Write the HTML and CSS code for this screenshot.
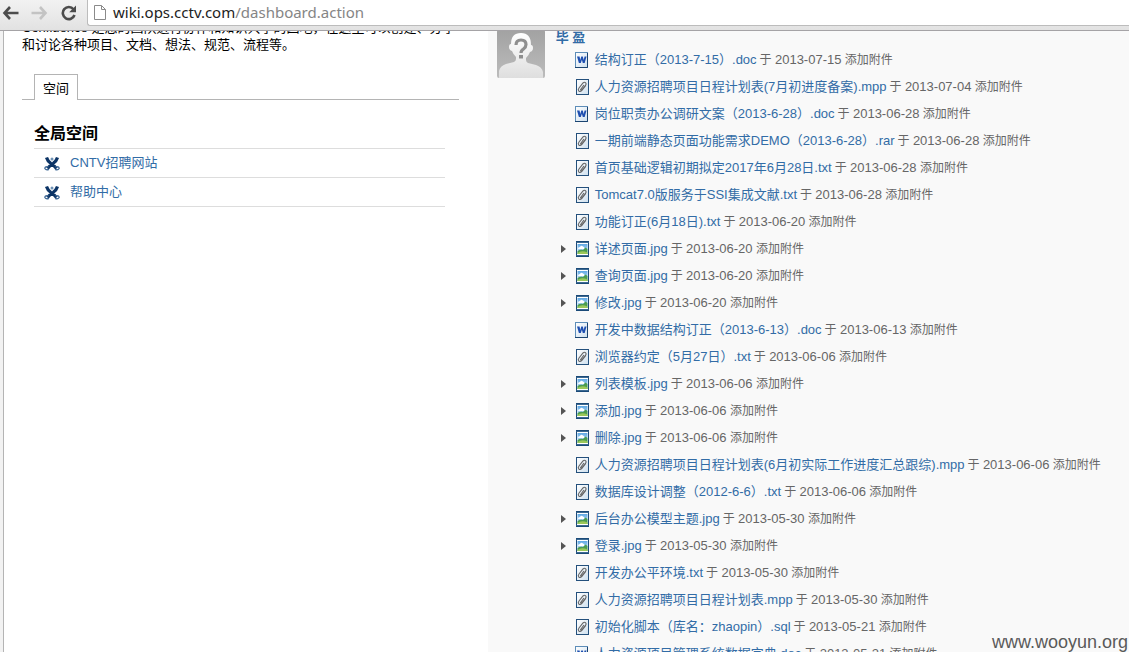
FILE: index.html
```html
<!DOCTYPE html>
<html lang="zh-CN">
<head>
<meta charset="utf-8">
<title>Dashboard</title>
<link rel="stylesheet" href="styles.css">
</head>
<body>
<svg class="defs" aria-hidden="true">
  <defs>
    <linearGradient id="paper" x1="0" y1="0" x2="1" y2="1"><stop offset="0" stop-color="#fff"/><stop offset="1" stop-color="#cfe0ee"/></linearGradient>
    <linearGradient id="sky" x1="0" y1="0" x2="0" y2="1"><stop offset="0" stop-color="#5fa8e4"/><stop offset="1" stop-color="#d8eefa"/></linearGradient>
    <linearGradient id="grey" x1="0" y1="0" x2="0" y2="1"><stop offset="0" stop-color="#a2a2a2"/><stop offset="1" stop-color="#bcbcbc"/></linearGradient>
    <linearGradient id="bust" x1="0" y1="0" x2="0" y2="1"><stop offset="0" stop-color="#fff"/><stop offset="1" stop-color="#dedede"/></linearGradient>
  </defs>
  <symbol id="doc" viewBox="0 0 14 16">
    <rect x=".5" y=".5" width="12" height="15" fill="url(#paper)" stroke="#5d8db8"/>
    <path d="M12.5 1v14.5H0" fill="none" stroke="#1b4470"/>
    <path d="M2 4.500h2.600l.6 3.600L6.300 4.500h1.500l.9 3.600.9-3.600h1.900L9.700 11H7.800l-.9-3.200L5.800 11H3.900z" fill="#1f4fb0"/>
  </symbol>
  <symbol id="clip" viewBox="0 0 14 16">
    <rect x="1.500" y=".5" width="12" height="15" fill="url(#paper)" stroke="#24507c"/>
    <path d="M10.800 6.300L6.700 11.700Q5 13.200 3.700 11.800Q2.700 10.600 4 9L8 4Q9.400 2.700 10.700 3.800Q11.700 4.900 10.500 6.400L6.900 10.900Q5.900 11.500 5.500 10.700L8.900 6" fill="none" stroke="#666" stroke-width="1.100"/>
  </symbol>
  <symbol id="img" viewBox="0 0 14 16">
    <rect x="1.500" y=".5" width="12" height="15" fill="#fff" stroke="#1b4a78"/>
    <path d="M1.500 1.500h12M1.500 14.500h12" stroke="#3d6a92"/>
    <rect x="2.500" y="3" width="10" height="10" fill="url(#sky)"/>
    <path d="M3 8q0-2 2-2 1-2 3-.5 1.500 0 1.500 2.500z" fill="#fff"/>
    <path d="M2.500 10q3-2 5.500-1l2.500-2.500 2 1.500v5h-10z" fill="#4c9c50"/>
    <path d="M2.500 12q4-3 10-.5V13h-10z" fill="#9bc85a"/>
  </symbol>
  <symbol id="space" viewBox="0 0 16 14">
    <circle cx="8" cy="2" r="1.500" fill="#6d91b5"/>
    <path d="M2.500 .5Q3.500 4 7 6.500Q10 8.500 12.500 11.500M13.500 .5Q12.500 4 9 6.500Q6 8.500 3.500 11.500" fill="none" stroke="#0c3466" stroke-width="3.200"/>
    <path d="M4.500 9.800Q1 9 .8 11.500Q2 13.500 5 12.300M11.500 9.800Q15 9 15.200 11.500Q14 13.500 11 12.300" fill="none" stroke="#456d99" stroke-width="1.300"/>
  </symbol>
</svg>
<header class="toolbar">
  <nav class="nav" aria-label="浏览器">
    <button class="nav-btn" aria-label="后退"><svg width="18" height="16" viewBox="0 0 18 16"><path d="M8 2L2.500 8 8 14M3 8h13.500" fill="none" stroke="#4c4c4c" stroke-width="2.600"/></svg></button>
    <button class="nav-btn" aria-label="前进"><svg width="18" height="16" viewBox="0 0 18 16"><path d="M9 2l5.500 6L9 14M14 8H.5" fill="none" stroke="#c3c3c3" stroke-width="2.600"/></svg></button>
    <button class="nav-btn" aria-label="刷新"><svg width="18" height="16" viewBox="0 0 18 16"><path d="M13.500 4.300A6 6 0 1 0 14.500 10" fill="none" stroke="#4c4c4c" stroke-width="2.600"/><path d="M16 .5v6.800H9.200z" fill="#4c4c4c"/></svg></button>
  </nav>
  <div class="address" role="textbox" aria-label="地址">
    <svg width="12" height="15" viewBox="0 0 12 15"><path d="M.5.5h7l4 4v10H.5zM7.500.5v4h4" fill="#fff" stroke="#8a8a8a"/></svg>
    <span class="url"><span class="host">wiki.ops.cctv.com</span>/dashboard.action</span>
  </div>
</header>
<main class="viewport">
  <div class="page">
    <section class="left">
      <p class="intro">Confluence 是您的团队进行协作和知识共享的园地，在这里可以创建、分享和讨论各种项目、文档、想法、规范、流程等。</p>
      <div class="tabs"><button class="tab">空间</button></div>
      <div class="spaces">
        <h2 class="spaces-title">全局空间</h2>
        <ul class="space-list">
          <li class="space"><svg class="space-icon"><use href="#space"/></svg><a class="link" href="#">CNTV招聘网站</a></li>
          <li class="space"><svg class="space-icon"><use href="#space"/></svg><a class="link" href="#">帮助中心</a></li>
        </ul>
      </div>
    </section>
    <section class="feed">
      <svg class="avatar" viewBox="0 0 48 48"><rect width="48" height="48" rx="2" fill="url(#grey)"/><path d="M2 48v-7q1-5 7-7l8-2q2-1 2-3v-2q-3-3-4-6-3-1-3-4t2-3Q14 3 24 3t10 12q2 0 2 3t-3 4q-1 3-4 6v2q0 2 2 3l8 2q6 2 7 7v6z" fill="url(#bust)"/><path d="M19 15q0-5 5-5t5 4.500q0 2.500-2.500 4.500-2.500 1.500-2.500 4" fill="none" stroke="#8f8f8f" stroke-width="3.200"/><rect x="22" y="25" width="4" height="3.500" fill="#8f8f8f"/></svg>
      <div class="feed-body">
        <a class="user" href="#">毕 盈</a>
        <ul class="files">
          <li class="file"><svg class="icon"><use href="#doc"/></svg><a class="link" href="#">结构订正（2013-7-15）.doc</a><span class="meta">于 <time>2013-07-15</time> 添加附件</span></li>
          <li class="file"><svg class="icon"><use href="#clip"/></svg><a class="link" href="#">人力资源招聘项目日程计划表(7月初进度备案).mpp</a><span class="meta">于 <time>2013-07-04</time> 添加附件</span></li>
          <li class="file"><svg class="icon"><use href="#doc"/></svg><a class="link" href="#">岗位职责办公调研文案（2013-6-28）.doc</a><span class="meta">于 <time>2013-06-28</time> 添加附件</span></li>
          <li class="file"><svg class="icon"><use href="#clip"/></svg><a class="link" href="#">一期前端静态页面功能需求DEMO（2013-6-28）.rar</a><span class="meta">于 <time>2013-06-28</time> 添加附件</span></li>
          <li class="file"><svg class="icon"><use href="#clip"/></svg><a class="link" href="#">首页基础逻辑初期拟定2017年6月28日.txt</a><span class="meta">于 <time>2013-06-28</time> 添加附件</span></li>
          <li class="file"><svg class="icon"><use href="#clip"/></svg><a class="link" href="#">Tomcat7.0版服务于SSI集成文献.txt</a><span class="meta">于 <time>2013-06-28</time> 添加附件</span></li>
          <li class="file"><svg class="icon"><use href="#clip"/></svg><a class="link" href="#">功能订正(6月18日).txt</a><span class="meta">于 <time>2013-06-20</time> 添加附件</span></li>
          <li class="file expandable"><svg class="icon"><use href="#img"/></svg><a class="link" href="#">详述页面.jpg</a><span class="meta">于 <time>2013-06-20</time> 添加附件</span></li>
          <li class="file expandable"><svg class="icon"><use href="#img"/></svg><a class="link" href="#">查询页面.jpg</a><span class="meta">于 <time>2013-06-20</time> 添加附件</span></li>
          <li class="file expandable"><svg class="icon"><use href="#img"/></svg><a class="link" href="#">修改.jpg</a><span class="meta">于 <time>2013-06-20</time> 添加附件</span></li>
          <li class="file"><svg class="icon"><use href="#doc"/></svg><a class="link" href="#">开发中数据结构订正（2013-6-13）.doc</a><span class="meta">于 <time>2013-06-13</time> 添加附件</span></li>
          <li class="file"><svg class="icon"><use href="#clip"/></svg><a class="link" href="#">浏览器约定（5月27日）.txt</a><span class="meta">于 <time>2013-06-06</time> 添加附件</span></li>
          <li class="file expandable"><svg class="icon"><use href="#img"/></svg><a class="link" href="#">列表模板.jpg</a><span class="meta">于 <time>2013-06-06</time> 添加附件</span></li>
          <li class="file expandable"><svg class="icon"><use href="#img"/></svg><a class="link" href="#">添加.jpg</a><span class="meta">于 <time>2013-06-06</time> 添加附件</span></li>
          <li class="file expandable"><svg class="icon"><use href="#img"/></svg><a class="link" href="#">删除.jpg</a><span class="meta">于 <time>2013-06-06</time> 添加附件</span></li>
          <li class="file"><svg class="icon"><use href="#clip"/></svg><a class="link" href="#">人力资源招聘项目日程计划表(6月初实际工作进度汇总跟综).mpp</a><span class="meta">于 <time>2013-06-06</time> 添加附件</span></li>
          <li class="file"><svg class="icon"><use href="#clip"/></svg><a class="link" href="#">数据库设计调整（2012-6-6）.txt</a><span class="meta">于 <time>2013-06-06</time> 添加附件</span></li>
          <li class="file expandable"><svg class="icon"><use href="#img"/></svg><a class="link" href="#">后台办公模型主题.jpg</a><span class="meta">于 <time>2013-05-30</time> 添加附件</span></li>
          <li class="file expandable"><svg class="icon"><use href="#img"/></svg><a class="link" href="#">登录.jpg</a><span class="meta">于 <time>2013-05-30</time> 添加附件</span></li>
          <li class="file"><svg class="icon"><use href="#clip"/></svg><a class="link" href="#">开发办公平环境.txt</a><span class="meta">于 <time>2013-05-30</time> 添加附件</span></li>
          <li class="file"><svg class="icon"><use href="#clip"/></svg><a class="link" href="#">人力资源招聘项目日程计划表.mpp</a><span class="meta">于 <time>2013-05-30</time> 添加附件</span></li>
          <li class="file"><svg class="icon"><use href="#clip"/></svg><a class="link" href="#">初始化脚本（库名：zhaopin）.sql</a><span class="meta">于 <time>2013-05-21</time> 添加附件</span></li>
          <li class="file"><svg class="icon"><use href="#doc"/></svg><a class="link" href="#">人力资源项目管理系统数据字典.doc</a><span class="meta">于 <time>2013-05-21</time> 添加附件</span></li>
        </ul>
      </div>
    </section>
  </div>
</main>
<div class="watermark">www.wooyun.org</div>
</body>
</html>
```

FILE: styles.css
```css
* { box-sizing: border-box; }
body {
  margin: 0;
  height: 100vh;
  display: flex;
  flex-direction: column;
  overflow: hidden;
  position: relative;
  background: #fff;
  color: #000;
  font: 13px/17px "Liberation Sans", "Noto Sans CJK SC", sans-serif;
}
ul { list-style: none; margin: 0; padding: 0; }
a { text-decoration: none; }
button { border: 0; padding: 0; background: none; font: inherit; color: inherit; }
.defs { position: absolute; width: 0; height: 0; }

.toolbar {
  flex: none;
  display: flex;
  padding-bottom: 4px;
  background: linear-gradient(#f2f2f2, #e2e2e2);
  border-bottom: 1px solid #a5a3a6;
}
.nav { display: flex; align-items: center; gap: 11px; padding: 0 9px 0 2px; }
.nav-btn { display: flex; }
.address {
  flex: 1;
  display: flex;
  align-items: center;
  gap: 7px;
  padding-left: 6px;
  background: #fff;
  border: solid #bcbcbc;
  border-width: 0 0 1px 1px;
  border-bottom-left-radius: 3px;
}
.url { font: 15px/25px "Noto Sans", sans-serif; color: #858585; }
.host { color: #222; }

.viewport { flex: 1; min-height: 0; overflow: hidden; padding-left: 3px; background: #f2f2f2; }
.page {
  display: grid;
  grid-template-columns: 43fr 57fr;
  margin-top: -12px;
  min-height: 100vh;
  border-left: 1px solid #b4b4b4;
  background: #fff;
}
.left { padding: 0 29px 0 18px; }
.intro { margin: 0; font-family: "Liberation Sans", "Noto Sans CJK TC", sans-serif; }
.tabs { display: flex; margin-top: 21px; padding-left: 12px; border-bottom: 1px solid #b4b4b4; }
.tab {
  height: 26px;
  margin-bottom: -1px;
  padding: 2px 8px 0;
  border: solid #b4b4b4;
  border-width: 1px 1px 0;
  background: #fff;
}
.spaces { padding: 23px 14px 0 12px; }
.spaces-title { margin: 0; padding-bottom: 3px; font-size: 16px; line-height: 22px; }
.space-list { border-top: 1px solid #ddd; }
.space {
  display: flex;
  align-items: center;
  gap: 10px;
  height: 29px;
  padding: 0 0 2px 10px;
  border-bottom: 1px solid #ddd;
}
.space-icon { width: 16px; height: 14px; margin-top: 3px; }
.link { color: #326ca6; }

.feed { display: flex; gap: 11px; padding: 11px 0 0 9px; background: #f9f9f9; }
.avatar { flex: none; width: 48px; height: 48px; }
.feed-body { flex: 1; white-space: nowrap; }
.user { display: block; line-height: 16px; font-weight: bold; color: #326ca6; }
.file {
  position: relative;
  display: flex;
  align-items: center;
  height: 27px;
  padding-left: 19px;
}
.expandable::before {
  content: "";
  position: absolute;
  left: 5px;
  border: solid transparent;
  border-width: 4px 0 4px 5px;
  border-left-color: #555;
}
.icon { flex: none; width: 14px; height: 16px; margin-right: 6px; }
.meta { margin-left: 3px; font-size: 12px; color: #666; }
.meta time { font-size: 13px; }
.watermark { position: absolute; right: 1px; bottom: 0; font-size: 18px; line-height: 20px; color: #5a5a5a; }
```
